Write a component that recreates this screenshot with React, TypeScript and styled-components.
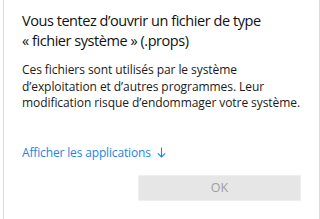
import React from "react";
import styled, { createGlobalStyle } from "styled-components";

const Global = createGlobalStyle`
  html, body { margin: 0; padding: 0; background: #fff; }
  body { font-family: "Open Sans", "Noto Sans", sans-serif; }
`;

const Dialog = styled.div`
  box-sizing: border-box;
  width: 317px;
  height: 219px;
  margin-left: 3px;
  border-left: 1px solid #dadada;
  border-right: 1px solid #dadada;
  background: #fff;
  padding: 11px 17px 0 18px;
  display: flex;
  flex-direction: column;
`;

const Title = styled.h1`
  margin: 0;
  font-size: 14.5px;
  font-weight: 400;
  line-height: 20px;
  color: #111;
  letter-spacing: -0.45px;
`;

const Body = styled.p`
  margin: 11px 0 0 0;
  font-size: 12px;
  line-height: 16.5px;
  color: #1a1a1a;
  letter-spacing: -0.07px;
`;

const Link = styled.a`
  margin-top: 33px;
  display: inline-flex;
  align-items: center;
  gap: 6px;
  font-size: 12px;
  line-height: 16px;
  color: #1c86e6;
  cursor: pointer;
  align-self: flex-start;
  letter-spacing: -0.15px;
`;

const Footer = styled.div`
  margin-top: 14px;
  padding-right: 1px;
  display: flex;
  justify-content: flex-end;
`;

const Button = styled.button<{ $disabled?: boolean }>`
  box-sizing: border-box;
  width: 163px;
  height: 26px;
  border: 1px solid #efefef;
  background: #e6e6e6;
  color: ${(p) => (p.$disabled ? "#9f9f9f" : "#000")};
  font-family: "Open Sans", "Noto Sans", sans-serif;
  font-size: 12.5px;
  padding: 0;
`;

const Arrow = () => (
  <svg width="9" height="11" viewBox="0 0 9 11" fill="none" stroke="currentColor" strokeWidth="1.1">
    <path d="M4.5 0.5 V10" />
    <path d="M0.8 6.3 L4.5 10 L8.2 6.3" />
  </svg>
);

export default function App() {
  return (
    <>
      <Global />
      <Dialog>
        <Title>
          Vous tentez d’ouvrir un fichier de type
          <br />« fichier système » (.props)
        </Title>
        <Body>
          Ces fichiers sont utilisés par le système d’exploitation et d’autres programmes. Leur
          modification risque d’endommager votre système.
        </Body>
        <Link>
          Afficher les applications <Arrow />
        </Link>
        <Footer>
          <Button $disabled>OK</Button>
        </Footer>
      </Dialog>
    </>
  );
}
